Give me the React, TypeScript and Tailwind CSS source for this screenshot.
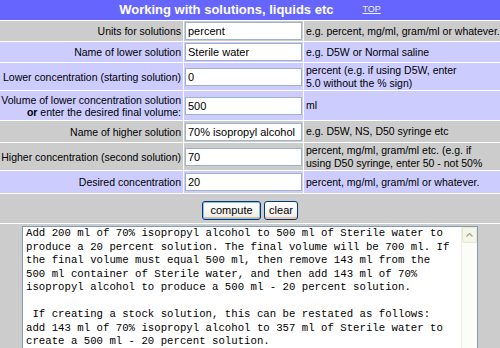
const sans = { fontFamily: '"Liberation Sans", Arial, sans-serif' };

type Row = {
  label: React.ReactNode;
  value: string;
  desc: React.ReactNode;
  bg: string;
  h: string;
};

const rows: Row[] = [
  {
    label: 'Units for solutions',
    value: 'percent',
    desc: 'e.g. percent, mg/ml, gram/ml or whatever.',
    bg: 'bg-[#cccccc]',
    h: 'h-[20px]',
  },
  {
    label: 'Name of lower solution',
    value: 'Sterile water',
    desc: 'e.g. D5W or Normal saline',
    bg: 'bg-[#ccccff]',
    h: 'h-[20px]',
  },
  {
    label: 'Lower concentration (starting solution)',
    value: '0',
    desc: (
      <>
        percent (e.g. if using D5W, enter
        <br />
        5.0 without the % sign)
      </>
    ),
    bg: 'bg-[#ccccff]',
    h: 'h-[27px]',
  },
  {
    label: (
      <>
        Volume of lower concentration solution
        <br />
        <b>or</b> enter the desired final volume:
      </>
    ),
    value: '500',
    desc: 'ml',
    bg: 'bg-[#ccccff]',
    h: 'h-[29px]',
  },
  {
    label: 'Name of higher solution',
    value: '70% isopropyl alcohol',
    desc: 'e.g. D5W, NS, D50 syringe etc',
    bg: 'bg-[#cccccc]',
    h: 'h-[21px]',
  },
  {
    label: 'Higher concentration (second solution)',
    value: '70',
    desc: (
      <>
        percent, mg/ml, gram/ml etc. (e.g. if
        <br />
        using D50 syringe, enter 50 - not 50%
      </>
    ),
    bg: 'bg-[#cccccc]',
    h: 'h-[27px]',
  },
  {
    label: 'Desired concentration',
    value: '20',
    desc: 'percent, mg/ml, gram/ml or whatever.',
    bg: 'bg-[#ccccff]',
    h: 'h-[22px]',
  },
];

const result = [
  'Add 200 ml of 70% isopropyl alcohol to 500 ml of Sterile water to',
  'produce a 20 percent solution. The final volume will be 700 ml. If',
  'the final volume must equal 500 ml, then remove 143 ml from the',
  '500 ml container of Sterile water, and then add 143 ml of 70%',
  'isopropyl alcohol to produce a 500 ml - 20 percent solution.',
  '',
  ' If creating a stock solution, this can be restated as follows:',
  'add 143 ml of 70% isopropyl alcohol to 357 ml of Sterile water to',
  'create a 500 ml - 20 percent solution.',
];

export default function App() {
  return (
    <div className="w-[500px] h-[348px] overflow-hidden bg-white text-black" style={sans}>
      <div className="grid grid-cols-[183px_119px_1fr] gap-px bg-white">
        <div className="col-span-3 h-[20px] bg-[#6666ff] flex items-center justify-center text-white">
          <span className="text-[13px] font-bold">Working with solutions, liquids etc</span>
          <a href="#" className="ml-[29px] text-[9px] underline text-[#eeeeff]">
            TOP
          </a>
        </div>

        {rows.map((r, i) => (
          <div key={i} className="contents">
            <div className={`${r.bg} ${r.h} flex items-center justify-end pr-[2px] text-right text-[10.5px] leading-[12px]`}>
              <span>{r.label}</span>
            </div>
            <div className={`${r.bg} ${r.h} flex items-center pl-px`}>
              <input
                defaultValue={r.value}
                className="w-[117px] h-[18px] bg-white border border-[#9fb3c8] px-[2px] text-[11px] outline-none"
                style={sans}
              />
            </div>
            <div className={`${r.bg} ${r.h} flex items-center pl-[2px] text-[10.5px] leading-[13px]`}>
              <span>{r.desc}</span>
            </div>
          </div>
        ))}

        <div className="col-span-3 h-[29px] bg-[#cccccc] flex items-center justify-center gap-[3px] pt-[4px]">
          <button className="h-[19px] w-[59px] rounded-[3px] border border-[#003c74] bg-gradient-to-b from-white to-[#ecebe6] text-[11px] shadow-[inset_0_0_0_1px_#97b8eb,inset_0_-2px_0_#e3c18e]" style={sans}>
            compute
          </button>
          <button className="h-[19px] w-[34px] rounded-[3px] border border-[#003c74] bg-gradient-to-b from-white to-[#ecebe6] text-[11px] shadow-[inset_0_-2px_0_#e9c3a8]" style={sans}>
            clear
          </button>
        </div>

        <div className="col-span-3 h-[140px] bg-[#cccccc] pt-[2px] px-[22px]">
          <div className="flex h-[136px] bg-white border border-[#7f9db9]">
            <div
              className="flex-1 pl-[3px] pt-0 text-[10.7px] leading-[13.5px] whitespace-pre text-black"
              style={{ fontFamily: '"Liberation Mono", "Courier New", monospace' }}
            >
              {result.map((line, i) => (
                <div key={i} className="h-[13.5px]">
                  {line}
                </div>
              ))}
            </div>
            <div className="w-[16px] bg-[#fcfcf8] border-l border-[#eeeee8]">
              <div className="h-[16px] flex items-center justify-center bg-[#f6f6e6] border border-[#e8e8c8] rounded-[2px]">
                <svg width="7" height="4" viewBox="0 0 7 4">
                  <path d="M0.5 3.5 L3.5 0.5 L6.5 3.5" fill="none" stroke="#a0a0a0" strokeWidth="1.2" />
                </svg>
              </div>
            </div>
          </div>
        </div>
      </div>
    </div>
  );
}
